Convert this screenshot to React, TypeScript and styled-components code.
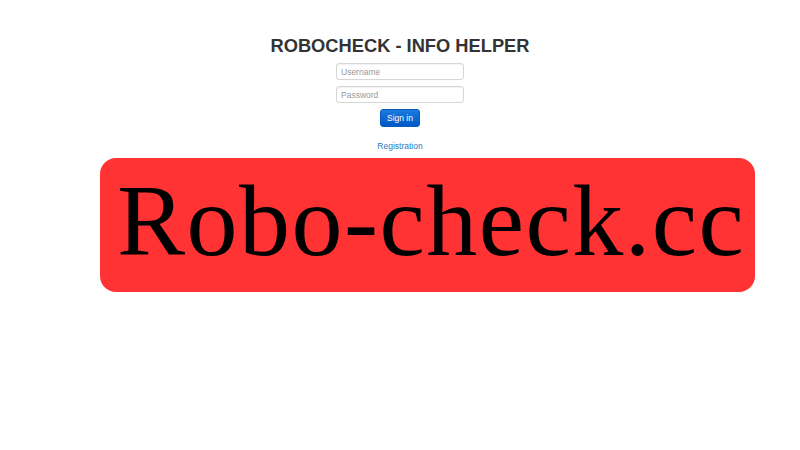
import React from "react";
import styled, { createGlobalStyle } from "styled-components";

const Global = createGlobalStyle`
  html, body { margin: 0; padding: 0; background: #fff; }
  body { font-family: "Liberation Sans", Arial, sans-serif; }
`;

const Page = styled.div`
  display: flex;
  flex-direction: column;
  align-items: center;
  padding-top: 36px;
`;

const Title = styled.h1`
  margin: 0;
  font-family: "Liberation Sans", Arial, sans-serif;
  font-weight: 700;
  font-size: 18.3px;
  line-height: 20px;
  color: #333;
`;

const Form = styled.form`
  display: flex;
  flex-direction: column;
  align-items: center;
  gap: 6px;
  margin-top: 7px;
`;

const Input = styled.input`
  box-sizing: border-box;
  width: 128px;
  height: 17px;
  padding: 0 4px;
  border: 1px solid #d6d6d6;
  border-radius: 3px;
  font-family: "Liberation Sans", Arial, sans-serif;
  font-size: 8.5px;
  color: #555;
  box-shadow: inset 0 1px 1px rgba(0, 0, 0, 0.05);
  &::placeholder { color: #999; }
`;

const Button = styled.button`
  box-sizing: border-box;
  width: 40px;
  height: 18px;
  padding: 0;
  border: 1px solid #0a5bb5;
  border-radius: 3px;
  background: linear-gradient(to bottom, #1a7be0 0%, #0058c4 100%);
  color: #fff;
  font-family: "Liberation Sans", Arial, sans-serif;
  font-size: 8.5px;
`;

const Link = styled.a`
  margin-top: 14px;
  font-family: "Liberation Sans", Arial, sans-serif;
  font-size: 8.5px;
  color: #2a7bc0;
  text-decoration: none;
`;

const Banner = styled.div`
  box-sizing: border-box;
  align-self: flex-start;
  margin-top: 7px;
  margin-left: 100px;
  width: 655px;
  height: 134px;
  background: #ff3333;
  border-radius: 16px;
  display: flex;
  align-items: center;
  padding-left: 17px;
`;

const BannerText = styled.span`
  font-family: "Liberation Serif", "Times New Roman", serif;
  font-size: 102px;
  line-height: 1;
  letter-spacing: 1.5px;
  color: #000;
  margin-top: -8px;
`;

export default function App() {
  return (
    <>
      <Global />
      <Page>
        <Title>ROBOCHECK - INFO HELPER</Title>
        <Form onSubmit={(e) => e.preventDefault()}>
          <Input placeholder="Username" />
          <Input type="password" placeholder="Password" />
          <Button type="submit">Sign in</Button>
        </Form>
        <Link href="#">Registration</Link>
        <Banner>
          <BannerText>Robo-check.cc</BannerText>
        </Banner>
      </Page>
    </>
  );
}
